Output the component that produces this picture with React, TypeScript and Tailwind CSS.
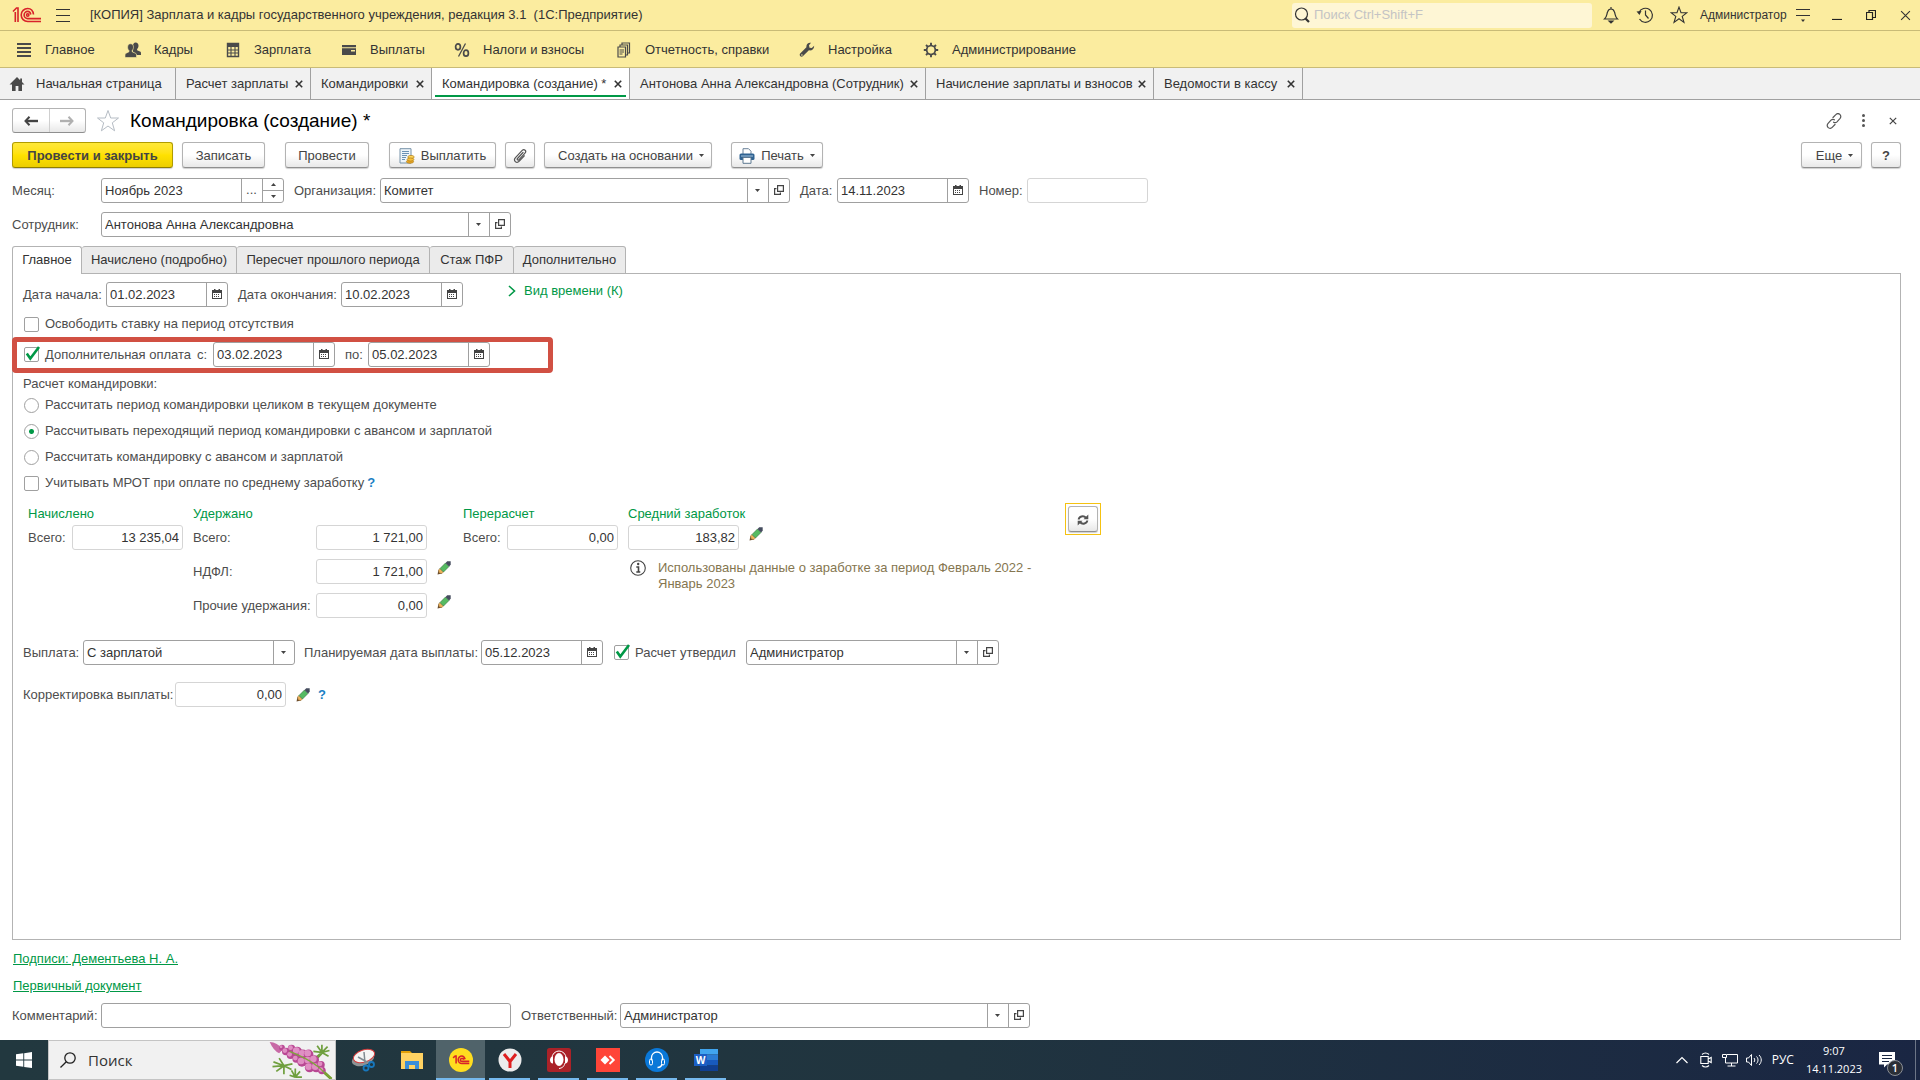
import React from "react";
import clsx from "clsx";

type IconProps = { className?: string };

const HomeIcon: React.FC<IconProps> = ({ className }) => (
  <svg viewBox="0 0 16 14" className={clsx("w-4 h-[14px]", className)} fill="#4a4a4a">
    <path d="M8 0 0.500 7.500H3V14h3.600V9h2.800v5H13V7.500h2.500L13 5V1.500h-1.800v1.700z" />
  </svg>
);

const ListIcon = () => (
  <svg viewBox="0 0 16 16" className="size-4" fill="#4a4a4a">
    <path d="M1 1h14v2H1zM1 5h14v2H1zM1 9h14v2H1zM1 13h14v2H1z" />
  </svg>
);

const PeopleIcon = () => (
  <svg viewBox="0 0 16 16" className="size-4" fill="#4a4a4a">
    <path d="M10.500 0.500c2 0 3 1.300 3 3.200 0 1.500-.7 2.600-1.400 3.200v1.400l3.400 1.500c.5.300.5 1 .5 3.200h-4l-4-3.200V4c0-2.200 1-3.500 2.500-3.500z" />
    <path
      d="M5.500 1.800C7.500 1.800 8.500 3.200 8.500 5.200c0 1.500-.7 2.700-1.300 3.300v1.300l3.600 1.600c.7.400.7 1.400.7 4.100H0c0-2.700 0-3.700.7-4.100L4 9.800V8.500C3.200 7.900 2.600 6.700 2.600 5.200c0-2 1-3.400 2.900-3.400z"
      stroke="#fbec9f"
      strokeWidth="0.600"
    />
  </svg>
);

const CalculatorIcon = () => (
  <svg viewBox="0 0 16 16" className="size-4" fill="none" stroke="#4a4a4a">
    <path d="M2.500 1.500h11v13h-11z" strokeWidth="1.400" />
    <path d="M3 3.500h10" strokeWidth="3" />
    <path d="M6 5v9M10 5v9M3 8h10M3 11h10" strokeWidth="1.100" />
  </svg>
);

const WalletIcon = () => (
  <svg viewBox="0 0 16 16" className="size-4" fill="#4a4a4a">
    <path d="M1 3h14v2.200H1zM1 6.200h14V13H1z" />
    <path d="M10 8h4v1.500h-4z" fill="#fbec9f" />
  </svg>
);

const PercentIcon = () => (
  <svg viewBox="0 0 16 16" className="size-4" fill="none" stroke="#4a4a4a" strokeWidth="1.700">
    <ellipse cx="4" cy="4.800" rx="2.400" ry="3" />
    <ellipse cx="12" cy="11.200" rx="2.400" ry="3" />
    <path d="M11.500 1.500 4.500 14.500" strokeWidth="1.300" />
  </svg>
);

const ReportsIcon = () => (
  <svg viewBox="0 0 16 16" className="size-4" fill="none" stroke="#4a4a4a" strokeWidth="1.200">
    <path d="M2 5h7.500v10H2zM4 5V3h7.500v10H10M6 3V1h7.500v10H12M3.500 8H8M3.500 10H8M3.500 12h3" />
  </svg>
);

const WrenchIcon = () => (
  <svg viewBox="0 0 16 16" className="size-4" fill="#4a4a4a">
    <path d="M12 .8C9.500.2 7 2.200 7.400 5.300L1.200 11.500c-1.500 1.700.800 4.200 2.600 2.800l6.100-6c2.800.6 5.300-1.300 5.300-4.600L12.800 6l-2.300-.3-.5-2.400z" />
    <circle cx="2.900" cy="13" r="0.800" fill="#fbec9f" />
  </svg>
);

const GearIcon = () => (
  <svg viewBox="0 0 16 16" className="size-4" fill="none" stroke="#4a4a4a">
    <circle cx="8" cy="8" r="4.300" strokeWidth="1.800" />
    <path
      d="M8 0.800V4M8 12v3.200M0.800 8H4M12 8h3.200M3 3l2.200 2.200M10.800 10.800 13 13M3 13l2.200-2.200M10.800 5.200 13 3"
      strokeWidth="1.900"
    />
    <circle cx="8" cy="8" r="3.200" fill="#fbec9f" stroke="none" />
  </svg>
);

const BellIcon = () => (
  <svg viewBox="0 0 16 18" className="w-4 h-[18px]" fill="none" stroke="#333" strokeWidth="1.200">
    <path d="M1.500 13h13c-2.600-2.500-2-4-3-7C10.900 4 9.800 3 8 3S5.100 4 4.500 6c-1 3-.4 4.500-3 7zM8 3V1" />
    <path d="M6 15h4l-2 2z" fill="#333" />
  </svg>
);

const HistoryIcon = () => (
  <svg viewBox="0 0 18 18" className="size-[18px]" fill="none" stroke="#333" strokeWidth="1.200">
    <path d="M3 6.500A7 7 0 1 1 3.500 13M9.500 4.500V9l3 3.500" />
    <path d="M0.500 5.500 5.500 5 3.500 9z" fill="#333" stroke="none" />
  </svg>
);

const StarIcon: React.FC<IconProps> = ({ className }) => (
  <svg viewBox="0 0 24 24" className={className} fill="none" strokeLinejoin="miter">
    <path d="M12 1.500 14.700 9H22.500L16.300 13.800 18.600 21.800 12 17 5.400 21.800 7.700 13.800 1.500 9H9.300z" />
  </svg>
);

const CloseMark: React.FC<IconProps> = ({ className }) => (
  <svg viewBox="0 0 10 10" className={className} fill="none" stroke="currentColor">
    <path d="M1 1 9 9M9 1 1 9" />
  </svg>
);

const CalendarIcon = () => (
  <svg viewBox="0 0 10 10" className="size-[10px]" fill="#444">
    <path d="M0 1h10v9H0zM1 4v5h8V4z" fillRule="evenodd" />
    <path d="M2 0h1.500v1H2zM6.500 0H8v1H6.500zM2 5h1v1H2zM4 5h1v1H4zM6 5h1v1H6zM2 7h1v1H2zM4 7h1v1H4zM6 7h1v1H6z" />
  </svg>
);

const OpenIcon = () => (
  <svg viewBox="0 0 10 10" className="size-[10px]" fill="none" stroke="#444" strokeWidth="1.200">
    <path d="M3.600.6h5.800v5.800H3.600zM2.500 3.600H.6v5.800h5.800V7.500" />
  </svg>
);

const Caret: React.FC<IconProps> = ({ className }) => (
  <svg viewBox="0 0 5 3" className={clsx("w-[5px] h-[3px]", className)} fill="#444">
    <path d="M0 0h5L2.500 3z" />
  </svg>
);

const PencilIcon = () => (
  <svg viewBox="0 0 14 14" className="size-[14px]">
    <path d="M0.500 13.500 1.500 9 5 12.500z" fill="#6a4b2a" />
    <path d="M1.500 9 3 7.500 6.500 11 5 12.500 2.200 12z" fill="#f0b35c" stroke="#8a6a3a" strokeWidth="0.500" />
    <path d="M3 7.500 8.500 2 12 5.500 6.500 11z" fill="#55bb62" stroke="#35713c" strokeWidth="0.600" />
    <path d="M8.500 2 10.200.3h3.500v3.500L12 5.500z" fill="#454c5e" />
  </svg>
);

const PayIcon = () => (
  <svg viewBox="0 0 16 16" className="size-4">
    <path d="M1 .7h11V15H1z" fill="#eef5fa" stroke="#7792a8" />
    <path d="M3 3.500h7M3 5.500h7M3 7.500h5M3 9.500h4M3 11.500h3" stroke="#5b87ad" strokeWidth="0.900" />
    <ellipse cx="12" cy="9" rx="3.200" ry="1.600" fill="#ffd75e" stroke="#b07c12" strokeWidth="0.700" />
    <ellipse cx="11" cy="13.600" rx="3.600" ry="1.700" fill="#eaa827" stroke="#b07c12" strokeWidth="0.700" />
    <ellipse cx="11.500" cy="11.500" rx="3.400" ry="1.600" fill="#f7be3b" stroke="#b07c12" strokeWidth="0.700" />
  </svg>
);

const ClipIcon = () => (
  <svg viewBox="0 0 16 16" className="size-4" fill="none" stroke="#555" strokeWidth="1.200" strokeLinecap="round">
    <path d="M11 4.500 5.500 10.500c-.9 1 .4 2.200 1.300 1.300L13 5.200c2-2.200-.8-4.800-2.800-2.800L3.500 9.600c-2.700 3 1 6.500 3.800 3.600l5-5.400" />
  </svg>
);

const PrinterIcon = () => (
  <svg viewBox="0 0 16 16" className="size-4">
    <path d="M4 6V.7h5.500L12 3.200V6" fill="#fff" stroke="#6b8299" />
    <rect x="0.500" y="5.500" width="15" height="6.500" rx="1.500" fill="#2f6291" />
    <path d="M2 8h12" stroke="#a9c6df" />
    <path d="M4 9.500h8v5.800H4z" fill="#fff" stroke="#5d7890" />
  </svg>
);

const LinkIcon = () => (
  <svg viewBox="0 0 16 16" className="size-4" fill="none" stroke="#555" strokeWidth="1.200" strokeLinecap="round">
    <path d="M7 4.500 9.800 1.700a2.800 2.800 0 0 1 4.300 3.700L11 8.800c-1 1-2.500 1-3.400.4M9 11.500l-2.800 2.800a2.800 2.800 0 0 1-4.300-3.700L5 7.200c1-1 2.500-1 3.400-.4" />
  </svg>
);

const RefreshIcon = () => (
  <svg viewBox="0 0 12 12" className="size-3" fill="none" stroke="#555" strokeWidth="2">
    <path d="M1.700 5.500C2 2.500 6.500 1.200 8.900 3.700M10.300 6.500C10 9.500 5.500 10.800 3.100 8.300" />
    <path d="M11.300 0.500V5.300H6.500zM.7 11.500V6.700H5.500z" fill="#555" stroke="none" />
  </svg>
);

const ArrowIcon: React.FC<IconProps> = ({ className }) => (
  <svg viewBox="0 0 14 10" className={clsx("w-[14px] h-[10px]", className)} fill="none" stroke="currentColor">
    <path d="M2 5h12" strokeWidth="2.400" />
    <path d="M5.500.8 1.500 5l4 4.200" strokeWidth="2" />
  </svg>
);

const InfoIcon = () => (
  <svg viewBox="0 0 16 16" className="size-4 shrink-0" fill="none" stroke="#444">
    <circle cx="8" cy="8" r="7.300" strokeWidth="1.100" />
    <path d="M6.300 7H8.500v4.500M6.300 12h4" strokeWidth="1.600" />
    <circle cx="8.200" cy="4" r="1.200" fill="#444" stroke="none" />
  </svg>
);

const OneCLogo: React.FC<IconProps> = ({ className }) => (
  <svg viewBox="0 0 30 18" className={className} fill="none" stroke="#d8232a" strokeWidth="1.600">
    <path d="M1 5.500 4.500 2H6v14M3.300 6v10" />
    <path d="M21.500 8.500C21 4.500 18.500 2.500 15.700 2.500a6.500 6.500 0 0 0 0 13H29" />
    <path d="M18.800 8.500C18.300 6.300 17 5.400 15.700 5.400a3.600 3.600 0 0 0 0 7.200H29" />
    <circle cx="15.700" cy="9" r="1.200" />
  </svg>
);

const Cell: React.FC<{ label: string; children: React.ReactNode }> = ({ label, children }) => (
  <button
    type="button"
    aria-label={label}
    className="flex w-[21px] shrink-0 items-center justify-center border-l border-[#a0a0a0] pr-px pb-px"
  >
    {children}
  </button>
);

type FieldProps = {
  id: string;
  value?: string;
  className: string;
  muted?: boolean;
  right?: boolean;
  children?: React.ReactNode;
};

const Field: React.FC<FieldProps> = ({ id, value = "", className, muted, right, children }) => (
  <div
    className={clsx(
      "flex h-[25px] shrink-0 rounded-[3px] border bg-white",
      muted ? "border-[#d5d5d5]" : "border-[#a0a0a0]",
      className
    )}
  >
    <input
      id={id}
      type="text"
      defaultValue={value}
      readOnly={muted}
      className={clsx("h-full min-w-0 flex-1 bg-transparent px-[3px] text-[#333] outline-none", right && "text-right")}
    />
    {children}
  </div>
);

const DateField: React.FC<{ id: string; value: string; className?: string }> = ({
  id,
  value,
  className = "w-[122px]",
}) => (
  <Field id={id} value={value} className={className}>
    <Cell label="Выбрать дату">
      <CalendarIcon />
    </Cell>
  </Field>
);

const RefField: React.FC<{ id: string; value: string; className: string }> = (props) => (
  <Field {...props}>
    <Cell label="Показать список">
      <Caret />
    </Cell>
    <Cell label="Открыть">
      <OpenIcon />
    </Cell>
  </Field>
);

const Check: React.FC<{ id: string; checked?: boolean; label: string }> = ({ id, checked, label }) => (
  <div className="flex items-center">
    <span className="relative mr-[6px] flex size-[15px]">
      <input
        id={id}
        type="checkbox"
        defaultChecked={checked}
        className="peer size-[15px] appearance-none rounded-[2px] border border-[#a0a0a0] bg-white"
      />
      <svg
        viewBox="0 0 15 15"
        className="pointer-events-none absolute inset-0 hidden overflow-visible peer-checked:block"
        fill="none"
        stroke="#009846"
        strokeWidth="2.600"
      >
        <path d="M2.800 6.500 6.300 11.500 15 0" />
      </svg>
    </span>
    <label htmlFor={id}>{label}</label>
  </div>
);

const Radio: React.FC<{ id: string; checked?: boolean; label: string }> = ({ id, checked, label }) => (
  <div className="flex h-[26px] items-center">
    <input
      id={id}
      type="radio"
      name="calc"
      defaultChecked={checked}
      className="mr-[6px] size-[15px] appearance-none rounded-full border border-[#a0a0a0] bg-white checked:bg-[radial-gradient(circle,#009846_2px,white_3px)]"
    />
    <label htmlFor={id}>{label}</label>
  </div>
);

const ToolButton: React.FC<{ className?: string; label?: string; primary?: boolean; children: React.ReactNode }> = ({
  className,
  label,
  primary,
  children,
}) => (
  <button
    type="button"
    aria-label={label}
    className={clsx(
      "flex h-[26px] items-center justify-center rounded-[3px] border pt-px text-[#444] shadow-[0_1px_1px_#cfcfcf]",
      primary
        ? "border-[#b19c00] border-b-[#8f7e00] bg-linear-to-b from-[#ffe838] via-[#ffe100] to-[#ecce00] font-bold"
        : "border-[#b3b3b3] border-b-[#8f8f8f] bg-linear-to-b from-white from-50% to-[#e8e8e8]",
      className
    )}
  >
    {children}
  </button>
);

const PencilButton = () => (
  <button type="button" aria-label="Изменить" className="flex size-[14px]">
    <PencilIcon />
  </button>
);

const HelpButton = () => (
  <button type="button" className="font-bold text-[#1a7fc4]">
    ?
  </button>
);

const menu = [
  { label: "Главное", icon: <ListIcon />, className: "w-[109px]" },
  { label: "Кадры", icon: <PeopleIcon />, className: "w-[100px]" },
  { label: "Зарплата", icon: <CalculatorIcon />, className: "w-[116px]" },
  { label: "Выплаты", icon: <WalletIcon />, className: "w-[113px]" },
  { label: "Налоги и взносы", icon: <PercentIcon />, className: "w-[162px]" },
  { label: "Отчетность, справки", icon: <ReportsIcon />, className: "w-[183px]" },
  { label: "Настройка", icon: <WrenchIcon />, className: "w-[124px]" },
  { label: "Администрирование", icon: <GearIcon />, className: "w-[160px]" },
];

const windows = [
  { label: "Расчет зарплаты", className: "w-[135px]" },
  { label: "Командировки", className: "w-[121px]" },
  { label: "Командировка (создание) *", className: "w-[198px]", active: true },
  { label: "Антонова Анна Александровна (Сотрудник)", className: "w-[296px]" },
  { label: "Начисление зарплаты и взносов", className: "w-[228px]" },
  { label: "Ведомости в кассу", className: "w-[149px]" },
];

const pages = [
  { label: "Главное", className: "w-[70px]", active: true },
  { label: "Начислено (подробно)", className: "w-[155px]" },
  { label: "Пересчет прошлого периода", className: "w-[193px]" },
  { label: "Стаж ПФР", className: "w-[84px]" },
  { label: "Дополнительно", className: "w-[112px]" },
];

const TitleBar = () => (
  <header className="flex h-[31px] items-center border-b border-[#c9bb77] bg-[#fbec9f] pl-3 text-[#333]">
    <OneCLogo className="h-[18px] w-[30px]" />
    <button type="button" aria-label="Меню" className="ml-[14px] flex w-[14px] flex-col gap-[5px]">
      <span className="h-px w-full bg-[#333]" />
      <span className="h-px w-full bg-[#333]" />
      <span className="h-px w-full bg-[#333]" />
    </button>
    <h1 className="ml-5 whitespace-pre">
      [КОПИЯ] Зарплата и кадры государственного учреждения, редакция 3.1  (1С:Предприятие)
    </h1>
    <label className="ml-auto flex h-[25px] w-[300px] items-center rounded-[3px] bg-[#fef6d5] pl-[2px]">
      <svg viewBox="0 0 16 16" className="size-4" fill="none" stroke="#333">
        <circle cx="7.500" cy="7" r="6" strokeWidth="1.200" />
        <path d="m11.500 11.500 3.500 3.500" strokeWidth="2.200" />
      </svg>
      <input
        type="text"
        aria-label="Поиск"
        placeholder="Поиск Ctrl+Shift+F"
        className="ml-1 flex-1 outline-none placeholder:text-[#c4c4c4]"
      />
    </label>
    <button type="button" aria-label="Уведомления" className="ml-[11px]">
      <BellIcon />
    </button>
    <button type="button" aria-label="История" className="ml-[17px]">
      <HistoryIcon />
    </button>
    <button type="button" aria-label="Избранное" className="ml-4">
      <StarIcon className="size-[18px] stroke-[#333] stroke-[1.5]" />
    </button>
    <span className="ml-3 w-[83px] text-xs">Администратор</span>
    <button type="button" aria-label="Настройки" className="ml-[13px]">
      <svg viewBox="0 0 14 16" className="h-4 w-[14px]" stroke="#333" strokeWidth="1.200">
        <path d="M0 2.500h14M0 8.500h14" />
        <path d="M5 12.500h4L7 15z" fill="#333" stroke="none" />
      </svg>
    </button>
    <button type="button" aria-label="Свернуть" className="ml-[22px]">
      <svg viewBox="0 0 10 10" className="size-[10px]" stroke="#222">
        <path d="M0 9.500h10" strokeWidth="1.200" />
      </svg>
    </button>
    <button type="button" aria-label="Развернуть" className="ml-6">
      <svg viewBox="0 0 10 10" className="size-[10px]" fill="none" stroke="#222">
        <path d="M.5 2.500h6v7h-6zM3 2.500v-2h6.500v7h-3" strokeWidth="1.200" />
      </svg>
    </button>
    <button type="button" aria-label="Закрыть" className="mr-[9px] ml-6">
      <CloseMark className="size-[11px]" />
    </button>
  </header>
);

const OpenWindows = () => (
  <nav className="flex h-[32px] border-b border-[#a0a0a0] bg-[#f1f1f1] text-[#333]">
    <a href="#home" className="flex w-[176px] items-center border-r border-[#a0a0a0] pl-[9px]">
      <HomeIcon />
      <span className="ml-[11px]">Начальная страница</span>
    </a>
    {windows.map((w) => (
      <div
        key={w.label}
        className={clsx("relative flex items-center border-r border-[#a0a0a0] pl-[10px]", w.className, w.active && "bg-white")}
      >
        <a href="#window" className="whitespace-nowrap">
          {w.label}
        </a>
        <button type="button" aria-label="Закрыть" className="mr-[7px] ml-auto">
          <CloseMark className="size-2 stroke-[2]" />
        </button>
        {w.active && <span className="absolute inset-x-[3px] bottom-[2px] h-[2px] bg-[#009846]" />}
      </div>
    ))}
  </nav>
);

const Toolbar = () => (
  <div className="mt-[9px] flex">
    <ToolButton className="w-[161px]" primary>
      Провести и закрыть
    </ToolButton>
    <ToolButton className="ml-[9px] w-[83px]">Записать</ToolButton>
    <ToolButton className="ml-5 w-[84px]">Провести</ToolButton>
    <ToolButton className="ml-5 w-[107px] gap-[6px]">
      <PayIcon />
      Выплатить
    </ToolButton>
    <ToolButton className="ml-[9px] w-[30px]" label="Присоединенные файлы">
      <ClipIcon />
    </ToolButton>
    <ToolButton className="ml-[9px] w-[168px] gap-[6px] pl-[6px]">
      Создать на основании
      <Caret />
    </ToolButton>
    <ToolButton className="ml-[19px] w-[92px] gap-[6px]">
      <PrinterIcon />
      Печать
      <Caret />
    </ToolButton>
    <ToolButton className="ml-auto w-[61px] gap-[6px] pl-[6px]">
      Еще
      <Caret />
    </ToolButton>
    <ToolButton className="ml-[9px] w-[30px] font-bold">?</ToolButton>
  </div>
);

const Totals = () => (
  <div className="mt-[7px] flex pl-[5px]">
    <section className="w-[165px]">
      <h3 className="h-[22px] leading-[22px] text-[#009846]">Начислено</h3>
      <div className="flex items-center">
        <label htmlFor="accrued" className="w-11">
          Всего:
        </label>
        <Field id="accrued" value="13 235,04" className="w-[111px]" muted right />
      </div>
    </section>
    <section className="w-[270px]">
      <h3 className="h-[22px] leading-[22px] text-[#009846]">Удержано</h3>
      <div className="flex flex-col gap-[9px]">
        <div className="flex items-center">
          <label htmlFor="held" className="w-[123px]">
            Всего:
          </label>
          <Field id="held" value="1 721,00" className="w-[111px]" muted right />
        </div>
        <div className="flex items-center">
          <label htmlFor="ndfl" className="w-[123px]">
            НДФЛ:
          </label>
          <Field id="ndfl" value="1 721,00" className="mr-[10px] w-[111px]" muted right />
          <span className="pb-2">
            <PencilButton />
          </span>
        </div>
        <div className="flex items-center">
          <label htmlFor="other" className="w-[123px] whitespace-nowrap">
            Прочие удержания:
          </label>
          <Field id="other" value="0,00" className="mr-[10px] w-[111px]" muted right />
          <span className="pb-2">
            <PencilButton />
          </span>
        </div>
      </div>
    </section>
    <section className="w-[165px]">
      <h3 className="h-[22px] leading-[22px] text-[#009846]">Перерасчет</h3>
      <div className="flex items-center">
        <label htmlFor="recalc" className="w-11">
          Всего:
        </label>
        <Field id="recalc" value="0,00" className="w-[111px]" muted right />
      </div>
    </section>
    <section className="w-[437px]">
      <h3 className="h-[22px] leading-[22px] text-[#009846]">
        <label htmlFor="average">Средний заработок</label>
      </h3>
      <div className="flex items-center">
        <Field id="average" value="183,82" className="mr-[10px] w-[111px]" muted right />
        <span className="pb-2">
          <PencilButton />
        </span>
      </div>
      <div className="mt-[10px] flex gap-3 pl-[2px] leading-4 text-[#857650]">
        <InfoIcon />
        <p className="w-[380px]">Использованы данные о заработке за период Февраль 2022 - Январь 2023</p>
      </div>
    </section>
    <div className="h-[32px] w-[36px] border border-[#f5c211] p-[2px]">
      <ToolButton className="w-[30px]" label="Пересчитать">
        <RefreshIcon />
      </ToolButton>
    </div>
  </div>
);

const MainPage = () => (
  <div className="flex-1 border-x border-b border-[#b3b3b3] pt-2 text-[#4d4d4d]">
    <div className="pl-[10px]">
      <div className="flex items-center">
        <label htmlFor="start" className="w-[83px]">
          Дата начала:
        </label>
        <DateField id="start" value="01.02.2023" />
        <label htmlFor="end" className="ml-[10px] w-[103px]">
          Дата окончания:
        </label>
        <DateField id="end" value="10.02.2023" />
        <button type="button" className="ml-[45px] flex items-center gap-2 pb-2 text-[#009846]">
          <svg viewBox="0 0 8 12" className="h-3 w-2" fill="none" stroke="#009846" strokeWidth="1.600">
            <path d="m1 1 5.500 5L1 11" />
          </svg>
          Вид времени (К)
        </button>
      </div>
      <div className="mt-[9px] pl-px">
        <Check id="free" label="Освободить ставку на период отсутствия" />
      </div>
    </div>
    <div className="mt-[5px] -ml-px flex h-9 w-[541px] items-start rounded-[4px] border-[5px] border-[#d15043] pl-[7px]">
      <div className="flex items-center">
        <Check id="extra" checked label="Дополнительная оплата" />
        <label htmlFor="from" className="ml-[6px] w-4">
          с:
        </label>
        <DateField id="from" value="03.02.2023" />
        <label htmlFor="to" className="ml-[10px] w-[23px]">
          по:
        </label>
        <DateField id="to" value="05.02.2023" />
      </div>
    </div>
    <div className="pt-[3px] pl-[10px]">
      <fieldset>
        <legend className="h-4 leading-4">Расчет командировки:</legend>
        <div className="pl-px">
          <Radio id="whole" label="Рассчитать период командировки целиком в текущем документе" />
          <Radio id="passing" checked label="Рассчитывать переходящий период командировки с авансом и зарплатой" />
          <Radio id="salary" label="Рассчитать командировку с авансом и зарплатой" />
        </div>
      </fieldset>
      <div className="flex h-[26px] items-center gap-[3px] pl-px">
        <Check id="mrot" label="Учитывать МРОТ при оплате по среднему заработку" />
        <HelpButton />
      </div>
      <Totals />
      <div className="mt-[22px] flex items-center">
        <label htmlFor="payout" className="w-[60px]">
          Выплата:
        </label>
        <div className="flex h-[25px] w-[212px] rounded-[3px] border border-[#a0a0a0]">
          <select id="payout" className="h-full flex-1 appearance-none px-[3px] text-[#333] outline-none">
            <option>С зарплатой</option>
          </select>
          <span className="pointer-events-none flex w-[21px] items-center justify-center border-l border-[#a0a0a0] pr-px pb-px">
            <Caret />
          </span>
        </div>
        <label htmlFor="planned" className="ml-[9px] w-[177px]">
          Планируемая дата выплаты:
        </label>
        <DateField id="planned" value="05.12.2023" />
        <div className="ml-[11px] w-[132px]">
          <Check id="approved" checked label="Расчет утвердил" />
        </div>
        <RefField id="approver" value="Администратор" className="w-[253px]" />
      </div>
      <div className="mt-[17px] flex items-center">
        <label htmlFor="correction" className="w-[152px]">
          Корректировка выплаты:
        </label>
        <Field id="correction" value="0,00" className="mr-[10px] w-[111px]" muted right />
        <PencilButton />
        <span className="ml-2">
          <HelpButton />
        </span>
      </div>
    </div>
  </div>
);

const TaskIcon: React.FC<{ label: string; open?: boolean; active?: boolean; children: React.ReactNode }> = ({
  label,
  open,
  active,
  children,
}) => (
  <button
    type="button"
    aria-label={label}
    className={clsx("relative flex h-full w-[49px] items-center justify-center", active && "bg-[#50636a]")}
  >
    <svg viewBox="0 0 24 24" className="size-6">
      {children}
    </svg>
    {(open || active) && (
      <span className={clsx("absolute bottom-0 h-[2px] bg-[#76b9ed]", active ? "inset-x-0" : "inset-x-1")} />
    )}
  </button>
);

const petals = [
  [14, 7, 3], [18, 11, 4], [24, 8, 4], [23, 15, 4], [30, 11, 5], [29, 19, 4],
  [36, 14, 5], [35, 22, 5], [42, 14, 5], [42, 21, 5], [48, 20, 5], [43, 28, 5],
  [50, 28, 5], [55, 25, 4], [56, 31, 4],
];

const Flower = () => (
  <svg viewBox="0 0 68 40" className="h-full w-[68px]">
    <path d="M6 5 Q34 16 52 27 L66 40" fill="none" stroke="#6e9a25" strokeWidth="3" />
    <path
      d="m16 26-11-4M16 26 4 27M16 26l-8 6M16 26l0 9M16 26l8 4M16 26l-5-8M16 26l9-2M28 38l-4-7M28 38l0-9M28 38l5-6M28 38l-6-2M28 38l7 0M56 12l-5-7M56 12l0-8M56 12l6-6M56 12l8-2M56 12l-9-1M56 12l7 4M56 12l-6 5M45 25l11-12"
      stroke="#6f9f3e"
      strokeWidth="1.800"
    />
    <path d="M1 1Q9 1 15 9L11 13Q5 10 1 1z" fill="#c86aa6" />
    {petals.map(([x, y, r]) => (
      <g key={`${x}-${y}`}>
        <circle cx={x} cy={y} r={r} fill="#b94893" />
        <circle cx={x - 1} cy={y - 1} r={r - 1.5} fill="#e08fc3" />
      </g>
    ))}
    <path d="M22 11Q40 18 52 27L66 40" fill="none" stroke="#7da83a" strokeWidth="1.300" />
  </svg>
);

const Taskbar = () => (
  <footer className="flex h-10 bg-linear-to-r from-[#22383f] via-[#20343f] to-[#1a2643] font-['Open_Sans','Noto_Sans',sans-serif] text-white">
    <button type="button" aria-label="Пуск" className="flex w-12 items-center justify-center">
      <svg viewBox="0 0 16 16" className="size-4" fill="#fff">
        <path d="M0 2.300 7.300 1.300V7.600H0zM8.200 1.200 16 0V7.600H8.200zM0 8.500h7.300v6.300L0 13.800zM8.200 8.500H16V16L8.200 14.900z" />
      </svg>
    </button>
    <label className="flex w-[288px] items-center border border-[#c4c4c4] bg-[#f1f1f1] pl-[11px] text-[#333]">
      <svg viewBox="0 0 16 16" className="size-4" fill="none" stroke="#222" strokeWidth="1.300">
        <circle cx="10" cy="6" r="5.200" />
        <path d="M6.300 9.700.5 15.500" />
      </svg>
      <input
        type="text"
        aria-label="Поиск Windows"
        placeholder="Поиск"
        className="ml-3 min-w-0 flex-1 text-[15px] outline-none placeholder:text-[#333]"
      />
      <Flower />
    </label>
    <div className="ml-[2px] flex">
      <TaskIcon label="Ножницы">
        <ellipse cx="12" cy="11" rx="11.500" ry="6.500" transform="rotate(-18 12 11)" fill="#8e9496" />
        <ellipse cx="13" cy="8" rx="11" ry="6" transform="rotate(-18 13 8)" fill="#f5f5f5" stroke="#d43c3c" />
        <path d="m7 9 9 5M13 4l1 11" stroke="#808b92" strokeWidth="1.500" />
        <circle cx="15" cy="20" r="2.500" fill="none" stroke="#1777bd" strokeWidth="1.800" />
        <circle cx="20.500" cy="16.500" r="2.500" fill="none" stroke="#1777bd" strokeWidth="1.800" />
      </TaskIcon>
      <TaskIcon label="Проводник">
        <path d="M1 3h9l2 2H1z" fill="#e3a008" />
        <path d="M1 5h22v16H1z" fill="#ffd262" />
        <path d="M5 13h14v8h-4v-4H9v4H5z" fill="#3a8ed8" />
      </TaskIcon>
      <TaskIcon label="1С:Предприятие" active>
        <circle cx="12" cy="12" r="12" fill="#ffdd1f" />
        <g transform="translate(3.500 6.500) scale(.6)" fill="none" stroke="#d8232a" strokeWidth="2.600">
          <path d="M1 5.500 4.500 2.500H6V15" />
          <path d="M21 8C20 4.500 18.500 2.500 15.700 2.500a6.200 6.200 0 0 0 0 12.500H28M19 8.500c-2-3-6-2-6 1 0 2 2 2 4 2H28" />
        </g>
      </TaskIcon>
      <TaskIcon label="Яндекс" open>
        <circle cx="12" cy="12" r="11.500" fill="#ececec" />
        <path d="m6 6 6 7.500L18 6M12 13v7" fill="none" stroke="#df1f1f" strokeWidth="3" />
      </TaskIcon>
      <TaskIcon label="Поддержка" open>
        <rect width="24" height="24" rx="2.500" fill="#ab2228" />
        <path d="M5 10a7 7 0 0 1 14 0" fill="none" stroke="#fff" strokeWidth="1" />
        <ellipse cx="12" cy="11.500" rx="4.500" ry="6.500" fill="#fff" />
        <path d="M6 8.500v7c-4 0-4-7 0-7zM18 8.500v7c4 0 4-7 0-7z" fill="#fff" />
        <path d="M18 15c-1 4-3 5-6 5.500" fill="none" stroke="#fff" />
      </TaskIcon>
      <TaskIcon label="AnyDesk" open>
        <path d="M0 0h24v24H0z" fill="#ff4538" />
        <path d="m9 7.500 4.500 4.500L9 16.500 4.500 12z" fill="#fff" />
        <path d="m13.500 8 4.200 4-4.200 4" fill="none" stroke="#fff" strokeWidth="2" />
      </TaskIcon>
      <TaskIcon label="Коннект" open>
        <circle cx="12" cy="12" r="12" fill="#0a78d8" />
        <path d="M6.500 12.500V9.500a5.500 5.500 0 0 1 11 0v3M17 16c-.5 2.500-2 3.500-4.500 3.500" fill="none" stroke="#fff" strokeWidth="1.300" />
        <rect x="4.500" y="11" width="3" height="6" rx="1.500" fill="none" stroke="#fff" />
        <rect x="16.500" y="11" width="3" height="6" rx="1.500" fill="none" stroke="#fff" />
      </TaskIcon>
      <TaskIcon label="Word" open>
        <path d="M6 1h18v5.500H6z" fill="#41a5ee" />
        <path d="M6 6.500h18V12H6z" fill="#2b7cd3" />
        <path d="M6 12h18v5.500H6z" fill="#185abd" />
        <path d="M6 17.500h18V23H6z" fill="#103f91" />
        <path d="M0 6h13v12H0z" fill="#1c5fc4" />
        <text x="6.500" y="15.500" textAnchor="middle" fontSize="10" fontWeight="700" fill="#fff">
          W
        </text>
      </TaskIcon>
    </div>
    <div className="ml-auto flex items-center">
      <svg viewBox="0 0 12 8" className="h-2 w-3" fill="none" stroke="#fff" strokeWidth="1.200">
        <path d="M.5 7 6 1.500 11.500 7" />
      </svg>
      <svg viewBox="0 0 12 16" className="ml-3 h-4 w-3" fill="none" stroke="#fff">
        <path d="M.8 4.500h7.400v7H.8zM8.200 7l3-1.500v5L8.200 9M2 2.500C4 .5 7 .5 9 2.500M2 13.500c2 2 5 2 7 0" strokeWidth="1.100" />
      </svg>
      <svg viewBox="0 0 16 14" className="ml-[10px] h-[14px] w-4" fill="none" stroke="#fff">
        <path d="M5 1.500h10.500v8.500H3.500V4.500M9.500 10v3M5.500 13h8M.5 1.500h4v3h-4z" />
      </svg>
      <svg viewBox="0 0 16 14" className="ml-2 h-[14px] w-4" fill="none" stroke="#fff">
        <path d="M.5 5h2l3-3.500v11L2.500 9h-2zM8 5c1 1.300 1 2.700 0 4M10.500 3.500c2 2 2 5 0 7M13 2c3 3 3 7 0 10" />
      </svg>
      <span className="ml-[10px] text-xs">РУС</span>
      <div className="ml-3 text-center text-[11px] leading-[18px]">
        <p>9:07</p>
        <p>14.11.2023</p>
      </div>
      <button type="button" aria-label="Центр уведомлений" className="relative ml-[17px] size-6">
        <svg viewBox="0 0 16 16" className="size-4">
          <path d="M0 0h16v12.500H8L5 15.500v-3H0z" fill="#fff" />
          <path d="M3 3.500h10M3 6.500h10M3 9.500h7" stroke="#1a2742" />
        </svg>
        <span className="absolute right-0 -bottom-1 flex size-4 items-center justify-center rounded-full border border-[#8b8f96] bg-[#2b2f36] text-[11px] font-semibold">
          1
        </span>
      </button>
      <span className="ml-3 h-10 w-[5px] border-l border-[#6c7587]" />
    </div>
  </footer>
);

const App: React.FC = () => {
  return (
    <div className="flex min-h-screen flex-col bg-white font-['Liberation_Sans',Arial,sans-serif] text-[13px] leading-4">
      <TitleBar />
      <nav className="flex h-[37px] items-center border-b border-[#c9bb77] bg-[#fbec9f] pt-px pl-4 text-[#333]">
        {menu.map((m) => (
          <a key={m.label} href="#section" className={clsx("flex items-center gap-[13px] whitespace-nowrap", m.className)}>
            {m.icon}
            {m.label}
          </a>
        ))}
      </nav>
      <OpenWindows />
      <main className="flex flex-1 flex-col pt-2 pr-[19px] pl-3 text-[#4d4d4d]">
        <div className="flex items-center">
          <div className="flex h-[25px] w-[74px] rounded-[3px] border border-[#b3b3b3] border-b-[#8f8f8f] bg-linear-to-b from-white from-50% to-[#e8e8e8]">
            <button type="button" aria-label="Назад" className="flex flex-1 items-center justify-center border-r border-[#cfcfcf]">
              <ArrowIcon className="text-[#444]" />
            </button>
            <button type="button" aria-label="Вперед" className="flex flex-1 items-center justify-center">
              <ArrowIcon className="rotate-180 text-[#b0b0b0]" />
            </button>
          </div>
          <button type="button" aria-label="В избранное" className="ml-[10px]">
            <StarIcon className="size-6 stroke-[#b5bcc4]" />
          </button>
          <h2 className="ml-[10px] text-[19px] leading-6 text-black">Командировка (создание) *</h2>
          <button type="button" aria-label="Ссылка" className="ml-auto">
            <LinkIcon />
          </button>
          <button type="button" aria-label="Действия" className="ml-5 flex flex-col gap-[2px]">
            <span className="size-[3px] rounded-full bg-[#555]" />
            <span className="size-[3px] rounded-full bg-[#555]" />
            <span className="size-[3px] rounded-full bg-[#555]" />
          </button>
          <button type="button" aria-label="Закрыть" className="mr-1 ml-6 text-[#444]">
            <CloseMark className="size-2 stroke-[1.5]" />
          </button>
        </div>
        <Toolbar />
        <div className="mt-[10px] flex items-center">
          <label htmlFor="month" className="w-[89px]">
            Месяц:
          </label>
          <Field id="month" value="Ноябрь 2023" className="w-[183px]">
            <Cell label="Выбрать">...</Cell>
            <div className="flex w-[21px] flex-col border-l border-[#a0a0a0]">
              <button type="button" aria-label="Больше" className="flex flex-1 items-center justify-center border-b border-[#a0a0a0]">
                <Caret className="rotate-180" />
              </button>
              <button type="button" aria-label="Меньше" className="flex flex-1 items-center justify-center">
                <Caret />
              </button>
            </div>
          </Field>
          <label htmlFor="org" className="ml-[10px] w-[86px]">
            Организация:
          </label>
          <RefField id="org" value="Комитет" className="w-[410px]" />
          <label htmlFor="date" className="ml-[10px] w-[37px]">
            Дата:
          </label>
          <DateField id="date" value="14.11.2023" className="w-[132px]" />
          <label htmlFor="number" className="ml-[10px] w-12">
            Номер:
          </label>
          <Field id="number" className="w-[121px]" muted />
        </div>
        <div className="mt-[9px] flex items-center">
          <label htmlFor="employee" className="w-[89px]">
            Сотрудник:
          </label>
          <RefField id="employee" value="Антонова Анна Александровна" className="w-[410px]" />
        </div>
        <div className="mt-[9px] flex text-[#333]" role="tablist">
          {pages.map((p) => (
            <button
              key={p.label}
              type="button"
              role="tab"
              aria-selected={!!p.active}
              className={clsx(
                "h-7 rounded-t-[3px] border-t border-r border-[#b3b3b3] whitespace-nowrap",
                p.className,
                p.active ? "border-l bg-white pb-px" : "border-b bg-[#ebebeb]"
              )}
            >
              {p.label}
            </button>
          ))}
          <span className="flex-1 border-b border-[#b3b3b3]" />
        </div>
        <MainPage />
        <div className="flex flex-col items-start gap-[11px] pt-[11px] pl-px text-[#009846] underline">
          <a href="#signatures">Подписи: Дементьева Н. А.</a>
          <a href="#source">Первичный документ</a>
        </div>
        <div className="mt-[9px] mb-3 flex items-center">
          <label htmlFor="comment" className="w-[89px]">
            Комментарий:
          </label>
          <Field id="comment" className="w-[410px]" />
          <label htmlFor="responsible" className="ml-[10px] w-[99px]">
            Ответственный:
          </label>
          <RefField id="responsible" value="Администратор" className="w-[410px]" />
        </div>
      </main>
      <Taskbar />
    </div>
  );
};

export default App;
